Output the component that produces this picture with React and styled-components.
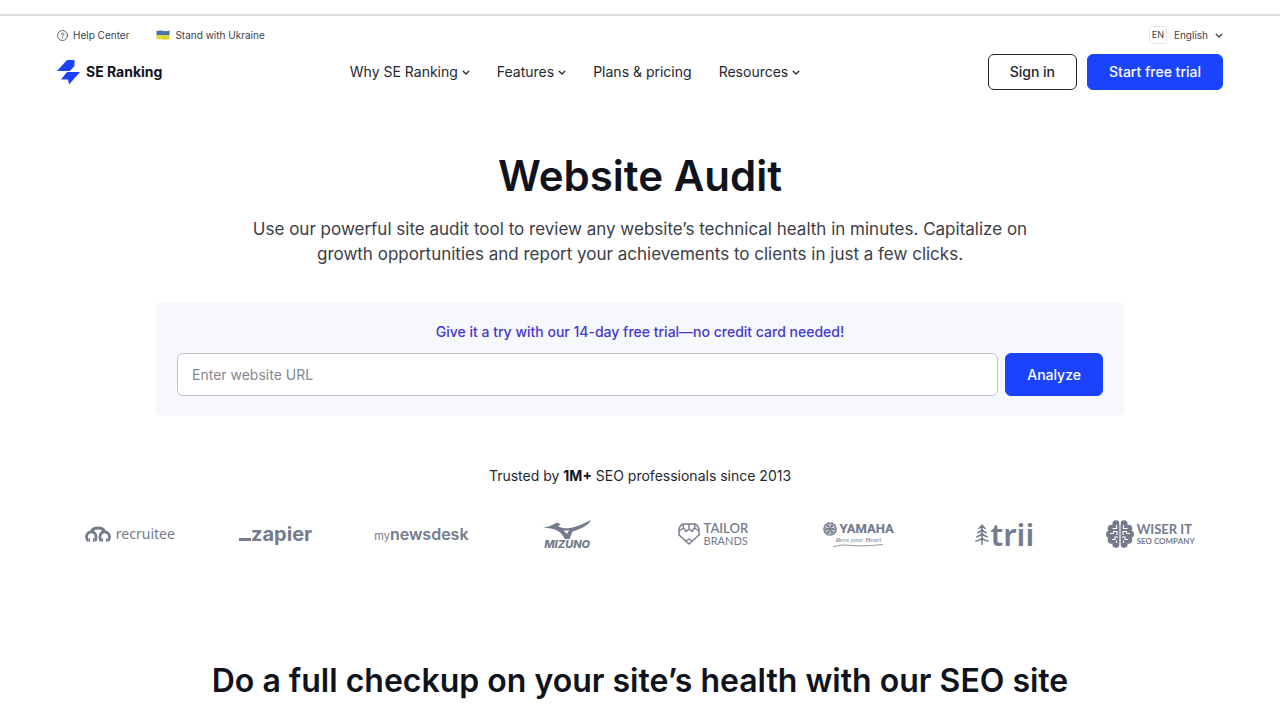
import styled, { createGlobalStyle } from "styled-components"

const GlobalStyle = createGlobalStyle`
* {
  box-sizing: border-box;
}
body {
  margin: 0;
  background: #fff;
  color: #10131c;
  font-family: "Inter", "Liberation Sans", sans-serif;
  overflow: hidden;
}
button, input {
  font-family: inherit;
}
`
const Page = styled.div`
width: 100%;
padding-top: 14px;
`
const Header = styled.header`
border-top: 2px solid #dedede;
padding: 0 57px;
`
const TopBar = styled.div`
display: flex;
align-items: center;
justify-content: space-between;
height: 38px;
`
const TopLinks = styled.div`
display: flex;
align-items: center;
gap: 27px;
`
const TopLink = styled.a`
display: flex;
align-items: center;
gap: 5px;
font-size: 10px;
color: #3b3e46;
text-decoration: none;
`
const Language = styled.button`
display: flex;
align-items: center;
gap: 7px;
padding: 0;
border: none;
background: transparent;
font-size: 10px;
color: #3b3e46;
`
const Code = styled.span`
width: 18px;
height: 18px;
line-height: 16px;
border: 1px solid #e6e7ea;
border-radius: 3px;
font-size: 9px;
text-align: center;
`
const MainBar = styled.div`
display: flex;
align-items: center;
justify-content: space-between;
`
const Brand = styled.a`
display: flex;
align-items: center;
gap: 6px;
font-size: 14px;
line-height: 18px;
font-weight: 700;
color: #10131c;
text-decoration: none;
`
const Nav = styled.nav`
display: flex;
gap: 27px;
`
const NavItem = styled.a`
display: flex;
align-items: center;
gap: 4px;
font-size: 14px;
line-height: 18px;
color: #24272f;
text-decoration: none;
`
const Actions = styled.div`
display: flex;
gap: 10px;
`
const Button = styled.button`
height: ${(props) => props.$tall ? "43px" : "36px"};
padding: 0 21px;
border: 1px solid ${(props) => props.$primary ? "#1a43fb" : "#24272f"};
border-radius: 6px;
background: ${(props) => props.$primary ? "#1a43fb" : "#fff"};
color: ${(props) => props.$primary ? "#fff" : "#24272f"};
font-size: 14px;
line-height: 18px;
font-weight: 500;
`
const Hero = styled.section`
padding: 60px 57px 0;
text-align: center;
`
const Title = styled.h1`
margin: 0;
font-size: 42px;
line-height: 52px;
font-weight: 600;
`
const Lead = styled.p`
max-width: 830px;
margin: 15px auto 0;
font-size: 17px;
line-height: 25px;
color: #3b3e46;
`
const TryBox = styled.form`
max-width: 968px;
margin: 35px auto 0;
padding: 20px 21px;
border-radius: 6px;
background: #f6f8fb;
`
const TryLabel = styled.label`
display: block;
margin-bottom: 11px;
font-size: 14px;
line-height: 20px;
font-weight: 500;
color: #4439d0;
`
const TryRow = styled.div`
display: flex;
gap: 7px;
`
const UrlInput = styled.input`
flex: 1;
height: 43px;
padding: 0 14px;
border: 1px solid #bcc3cc;
border-radius: 6px;
background: #fff;
font-size: 14px;

&::placeholder {
  color: #858993;
  opacity: 1;
}
`
const Trusted = styled.p`
margin: 50px 0 0;
font-size: 14px;
line-height: 20px;
color: #24272f;
`
const Strong = styled.strong`
font-weight: 700;
color: #10131c;
`
const Logos = styled.div`
display: grid;
grid-template-columns: repeat(8, 1fr);
margin-top: 28px;
`
const Logo = styled.div`
display: flex;
align-items: center;
justify-content: center;
flex-direction: ${(props) => props.$stacked ? "column" : "row"};
gap: ${(props) => props.$gap || 0}px;
height: 40px;
color: #747b8c;
`
const Word = styled.span`
font-family: ${(props) => props.$font || "Inter"}, sans-serif;
font-size: ${(props) => props.$size}px;
line-height: ${(props) => props.$line || props.$size}px;
font-weight: ${(props) => props.$weight || 400};
font-style: ${(props) => props.$italic ? "italic" : "normal"};
white-space: nowrap;
`
const Words = styled.div`
display: flex;
flex-direction: column;
align-items: flex-start;
`
const Baseline = styled.div`
display: flex;
align-items: baseline;
`
const Row = styled.div`
display: flex;
align-items: center;
gap: 2px;
`
const Rule = styled.i`
width: 12px;
height: 3px;
background: currentColor;
`
const SectionTitle = styled.h2`
margin: 107px 0 0;
font-size: 32px;
line-height: 40px;
font-weight: 600;
text-align: center;
`

const Chevron = () => (
  <svg width="8" height="8" viewBox="0 0 8 8" fill="none" stroke="currentColor" strokeWidth="1.3" strokeLinecap="round" strokeLinejoin="round">
    <path d="M1.2 3.2 4 6 6.8 3.2" />
  </svg>
)

const HelpIcon = () => (
  <svg width="11" height="11" viewBox="0 0 11 11" fill="none" stroke="currentColor" strokeWidth="0.8" strokeLinecap="round">
    <circle cx="5.5" cy="5.5" r="5" />
    <path d="M4.2 4.3C4.2 2.6 6.9 2.6 6.9 4.3 6.9 5.3 5.5 5.3 5.5 6.5M5.5 8v.2" />
  </svg>
)

const Flag = () => (
  <svg width="14" height="10" viewBox="0 0 14 10">
    <path d="M.5 1Q4 0 7 .8T13.5.6V5H.5Z" fill="#4a72a8" />
    <path d="M.5 5H13.5V9.2Q10 10 7 9.4T.5 9.6Z" fill="#ded43c" />
  </svg>
)

const BrandMark = () => (
  <svg width="23" height="26" viewBox="0 0 23 26" fill="#1a43fb">
    <path d="M10 1H17.5V7L13 12H0Z" />
    <path d="M10 13H23L12 25.5 11 20.5H4Z" />
  </svg>
)

const RecruiteeMark = () => (
  <svg width="26" height="17" viewBox="0 0 26 17" fill="none" stroke="currentColor" strokeLinecap="round">
    <path d="M7 4.6C9 1.2 17 1.2 19 4.6" strokeWidth="3" />
    <path d="M2.6 14.2C.2 11 2 5.8 6.5 5.8 10.5 5.8 12 10 10.4 14.2" strokeWidth="2.7" />
    <path d="M15.6 14.2C14 10 15.5 5.8 19.5 5.8 24 5.8 25.8 11 23.4 14.2" strokeWidth="2.7" />
    <path d="M4.5 15.5V12.5M8.5 15.5V12.5M17.5 15.5V12.5M21.5 15.5V12.5" strokeWidth="1" />
  </svg>
)

const MizunoMark = () => (
  <svg width="48" height="19" viewBox="0 0 48 19" fill="currentColor">
    <path d="M0 7.8C5 6.6 9 5.4 12.5 3.2 15 2.4 17 3.4 17.5 4.5L15 6C18 8 21.5 8.5 25 8.2 34 7 41 3.5 48 0 46 4.5 40 8.5 29.5 11.5L26.5 19H21.5C20.5 15.5 18 12.5 13.5 10.2 9 8.2 4.5 8 0 7.8Z" />
    <path d="M20.5 10.8 26 10.2 24 14C23 12.6 21.5 11.6 20.5 10.8Z" fill="#fff" />
  </svg>
)

const TailorMark = () => (
  <svg width="22" height="22" viewBox="0 0 22 22" fill="none" stroke="currentColor" strokeWidth="1.4" strokeLinejoin="round">
    <path d="M5 1H17Q21 3 21 7.5V12L11 21 1 12V7.5Q1 3 5 1Z" />
    <path d="M1 8 5.5 5 8 8.5 11 6 14 8.5 16.5 5 21 8M5.5 5 5 1M16.5 5 17 1M11 1V6M7.8 18 11 16 14.2 18" />
  </svg>
)

const YamahaMark = () => (
  <svg width="14" height="14" viewBox="0 0 14 14">
    <circle cx="7" cy="7" r="6.8" fill="currentColor" />
    <circle cx="7" cy="7" r="5" fill="none" stroke="#fff" strokeWidth="0.5" />
    <path d="M7 1.8V12.2M2.5 4.4 11.5 9.6M11.5 4.4 2.5 9.6" stroke="#fff" strokeWidth="0.9" />
    <circle cx="7" cy="7" r="1.8" fill="currentColor" />
  </svg>
)

const Swoosh = () => (
  <svg width="52" height="3" viewBox="0 0 52 3" fill="none" stroke="currentColor" strokeWidth="0.8">
    <path d="M0 2.6Q8 0 18 1.4T50 .5" />
  </svg>
)

const TreeMark = () => (
  <svg width="14" height="21" viewBox="0 0 14 21" fill="none" stroke="currentColor" strokeWidth="1.5" strokeLinecap="round" strokeLinejoin="round">
    <path d="M7 1V20.5M4 4.5 7 1.2 10 4.5M2.8 8.8Q5.5 8 7 5.5 8.5 8 11.2 8.8M1.8 12.8Q5.5 12 7 9.5 8.5 12 12.2 12.8M.8 17Q5.5 16.5 7 13.5 8.5 16.5 13.2 17" />
  </svg>
)

const BrainMark = () => (
  <svg width="28" height="28" viewBox="0 0 28 28">
    <g fill="currentColor">
      <circle cx="10" cy="3.8" r="3.6" />
      <circle cx="18" cy="3.8" r="3.6" />
      <circle cx="5.5" cy="8.5" r="3.8" />
      <circle cx="22.5" cy="8.5" r="3.8" />
      <circle cx="3.8" cy="14.2" r="3.7" />
      <circle cx="24.2" cy="14.2" r="3.7" />
      <circle cx="5.5" cy="20" r="3.8" />
      <circle cx="22.5" cy="20" r="3.8" />
      <circle cx="10" cy="24.2" r="3.6" />
      <circle cx="18" cy="24.2" r="3.6" />
      <path d="M6 5H22V23H6Z" />
    </g>
    <g fill="none" stroke="#fff" strokeWidth="1.1">
      <path d="M14 0V28M10.5 5V8.5H6.5M17.5 5V8.5H21.5M4 13.5H7.5V11.5H11V15M24 13.5H20.5V11.5H17V15M6 19.5H9V17H12M22 19.5H19V17H16M10.5 23V20.5M17.5 23V20.5" />
    </g>
  </svg>
)

const navItems = [
  { label: "Why SE Ranking", menu: true },
  { label: "Features", menu: true },
  { label: "Plans & pricing" },
  { label: "Resources", menu: true },
]

const App = () => {
  return (
    <Page>
      <GlobalStyle />
      <Header>
        <TopBar>
          <TopLinks>
            <TopLink href="#help"><HelpIcon />Help Center</TopLink>
            <TopLink href="#ukraine"><Flag />Stand with Ukraine</TopLink>
          </TopLinks>
          <Language type="button"><Code>EN</Code>English<Chevron /></Language>
        </TopBar>
        <MainBar>
          <Brand href="#home"><BrandMark />SE Ranking</Brand>
          <Nav>
            {navItems.map((item) => (
              <NavItem href="#nav" key={item.label}>
                {item.label}
                {item.menu && <Chevron />}
              </NavItem>
            ))}
          </Nav>
          <Actions>
            <Button type="button">Sign in</Button>
            <Button type="button" $primary>Start free trial</Button>
          </Actions>
        </MainBar>
      </Header>
      <Hero>
        <Title>Website Audit</Title>
        <Lead>
          Use our powerful site audit tool to review any website’s technical health in minutes. Capitalize on
          growth opportunities and report your achievements to clients in just a few clicks.
        </Lead>
        <TryBox>
          <TryLabel htmlFor="url">Give it a try with our 14-day free trial—no credit card needed!</TryLabel>
          <TryRow>
            <UrlInput id="url" type="text" placeholder="Enter website URL" />
            <Button type="button" $primary $tall>Analyze</Button>
          </TryRow>
        </TryBox>
        <Trusted>Trusted by <Strong>1M+</Strong> SEO professionals since 2013</Trusted>
        <Logos>
          <Logo $gap={5}>
            <RecruiteeMark />
            <Word $font="Noto Sans" $size={14}>recruitee</Word>
          </Logo>
          <Logo>
            <Baseline>
              <Rule />
              <Word $size={20} $weight={700}>zapier</Word>
            </Baseline>
          </Logo>
          <Logo>
            <Baseline>
              <Word $size={11}>my</Word>
              <Word $size={16} $line={20} $weight={600}>newsdesk</Word>
            </Baseline>
          </Logo>
          <Logo $stacked>
            <MizunoMark />
            <Word $size={11} $line={10} $weight={800} $italic>MIZUNO</Word>
          </Logo>
          <Logo $gap={4}>
            <TailorMark />
            <Words>
              <Word $font="Lato" $size={13} $line={13} $weight={600}>TAILOR</Word>
              <Word $font="Lato" $size={11} $line={11}>BRANDS</Word>
            </Words>
          </Logo>
          <Logo $stacked>
            <Row>
              <YamahaMark />
              <Word $font="Roboto" $size={13} $line={16} $weight={800}>YAMAHA</Word>
            </Row>
            <Word $font="Liberation Serif" $size={7} $italic>Revs your Heart</Word>
            <Swoosh />
          </Logo>
          <Logo $gap={2}>
            <TreeMark />
            <Word $font="Noto Sans" $size={31} $weight={600}>trii</Word>
          </Logo>
          <Logo $gap={3}>
            <BrainMark />
            <Words>
              <Word $font="Lato" $size={13} $line={14} $weight={700}>WISER IT</Word>
              <Word $font="Lato" $size={8} $line={10} $weight={700}>SEO COMPANY</Word>
            </Words>
          </Logo>
        </Logos>
      </Hero>
      <SectionTitle>Do a full checkup on your site’s health with our SEO site</SectionTitle>
    </Page>
  )
}

export default App
